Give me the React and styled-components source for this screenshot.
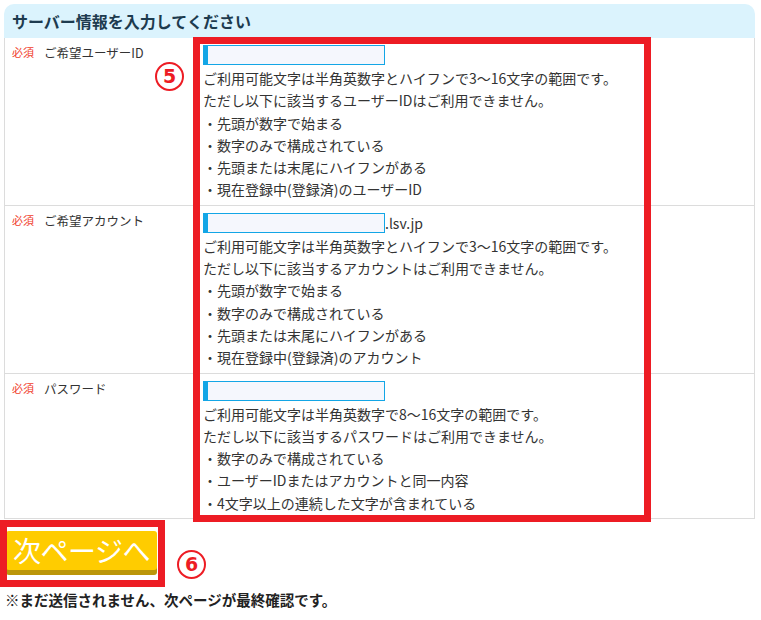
import React from 'react'
import styled, { createGlobalStyle } from 'styled-components'

const GlobalStyle = createGlobalStyle`
  body {
    margin: 0;
    background: #fff;
    font-family: "Noto Sans CJK JP", "Noto Sans", sans-serif;
    color: #333;
  }
`;

const Page = styled.div`padding:4px 4px 0 4px;width:751px;`;
const Section = styled.div`position:relative;`;
const Header = styled.div`height:34px;background:#dbf3fd;border-radius:10px 10px 0 0;display:flex;align-items:center;padding-left:8px;font-size:16px;font-weight:700;color:#1d3b4f;`;
const Table = styled.div`border-left:1px solid #dcdcdc;border-right:1px solid #dcdcdc;border-bottom:1px solid #dcdcdc;`;
const Row = styled.div`display:grid;grid-template-columns:190px 1fr;border-top:${p => (p.first ? 'none' : '1px solid #dcdcdc')};`;
const LabelCell = styled.div`padding:7px 7px;display:flex;align-items:flex-start;gap:10px;line-height:15px;`;
const Required = styled.span`font-size:11px;color:#f0402c;`;
const LabelText = styled.span`font-size:12.5px;color:#333;`;
const FieldCell = styled.div`padding:7px 8px 4px 8px;font-size:14px;line-height:22.3px;`;
const InputLine = styled.div`display:flex;align-items:center;height:20px;margin-bottom:2px;`;
const Input = styled.input`box-sizing:border-box;width:182px;height:20px;border:1px solid #13a6e6;border-left:5px solid #13a6e6;background:#f5f7fd;padding:0 4px;margin:0;outline:none;`;
const Suffix = styled.span`font-size:14px;color:#333;line-height:20px;`;
const Line = styled.div`white-space:nowrap;`;

const Highlight = styled.div`position:absolute;left:189px;top:33px;width:458px;height:485px;box-sizing:border-box;border:7px solid #ed1c24;pointer-events:none;`;
const Marker = styled.div`
  position:${p => (p.floating ? 'absolute' : 'static')};
  left:${p => p.left || 0}px;top:${p => p.top || 0}px;
  width:25px;height:25px;border:2px solid #ed1c24;border-radius:50%;
  display:flex;align-items:center;justify-content:center;
  color:#ed1c24;font-family:"DejaVu Sans", "Noto Sans", sans-serif;font-weight:700;font-size:19px;line-height:1;
  margin-top:${p => p.mt || 0}px;margin-left:${p => p.ml || 0}px;flex:none;
`;

const Footer = styled.div`display:flex;align-items:flex-start;margin-top:12px;padding-left:2px;`;
const ButtonWrap = styled.div`position:relative;`;
const NextButton = styled.button`
  width:151px;height:39px;border:none;border-radius:3px;background:#ffcc00;
  box-shadow:0 5px 0 #bb960a;color:#fff;font-family:"Noto Sans CJK JP", sans-serif;
  font-size:28px;line-height:39px;padding:0;cursor:pointer;letter-spacing:-0.5px;
`;
const ButtonFrame = styled.div`position:absolute;left:-6px;top:-11px;width:165px;height:67px;box-sizing:border-box;border:7px solid #ed1c24;pointer-events:none;`;
const Note = styled.p`margin:11px 0 0 1px;font-size:14.5px;font-weight:700;color:#222;line-height:20px;`;

const rows = [
  {
    label: 'ご希望ユーザーID',
    lines: [
      'ご利用可能文字は半角英数字とハイフンで3〜16文字の範囲です。',
      'ただし以下に該当するユーザーIDはご利用できません。',
      '・先頭が数字で始まる',
      '・数字のみで構成されている',
      '・先頭または末尾にハイフンがある',
      '・現在登録中(登録済)のユーザーID',
    ],
  },
  {
    label: 'ご希望アカウント',
    suffix: '.lsv.jp',
    lines: [
      'ご利用可能文字は半角英数字とハイフンで3〜16文字の範囲です。',
      'ただし以下に該当するアカウントはご利用できません。',
      '・先頭が数字で始まる',
      '・数字のみで構成されている',
      '・先頭または末尾にハイフンがある',
      '・現在登録中(登録済)のアカウント',
    ],
  },
  {
    label: 'パスワード',
    lines: [
      'ご利用可能文字は半角英数字で8〜16文字の範囲です。',
      'ただし以下に該当するパスワードはご利用できません。',
      '・数字のみで構成されている',
      '・ユーザーIDまたはアカウントと同一内容',
      '・4文字以上の連続した文字が含まれている',
    ],
  },
];

const App = () => {
  return (
    <Page>
      <GlobalStyle />
      <Section>
        <Header>サーバー情報を入力してください</Header>
        <Table>
          {rows.map((row, i) => (
            <Row key={row.label} first={i === 0}>
              <LabelCell>
                <Required>必須</Required>
                <LabelText>{row.label}</LabelText>
              </LabelCell>
              <FieldCell>
                <InputLine>
                  <Input type="text" />
                  {row.suffix && <Suffix>{row.suffix}</Suffix>}
                </InputLine>
                {row.lines.map(l => <Line key={l}>{l}</Line>)}
              </FieldCell>
            </Row>
          ))}
        </Table>
        <Highlight />
        <Marker floating left={151} top={58}>5</Marker>
      </Section>
      <Footer>
        <ButtonWrap>
          <NextButton>次ページへ</NextButton>
          <ButtonFrame />
        </ButtonWrap>
        <Marker mt={19} ml={20}>6</Marker>
      </Footer>
      <Note>※まだ送信されません、次ページが最終確認です。</Note>
    </Page>
  )
}

export default App
